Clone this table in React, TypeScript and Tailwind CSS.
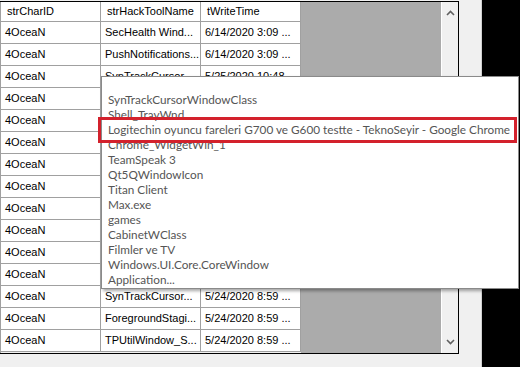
import React from "react";

const rows: [string, string, string][] = [
  ["4OceaN", "SecHealth Wind...", "6/14/2020 3:09 ..."],
  ["4OceaN", "PushNotifications...", "6/14/2020 3:09 ..."],
  ["4OceaN", "SynTrackCursor...", "5/25/2020 10:48 ..."],
  ["4OceaN", "", ""],
  ["4OceaN", "", ""],
  ["4OceaN", "", ""],
  ["4OceaN", "", ""],
  ["4OceaN", "", ""],
  ["4OceaN", "", ""],
  ["4OceaN", "", ""],
  ["4OceaN", "", ""],
  ["4OceaN", "", ""],
  ["4OceaN", "SynTrackCursor...", "5/24/2020 8:59 ..."],
  ["4OceaN", "ForegroundStagi...", "5/24/2020 8:59 ..."],
  ["4OceaN", "TPUtilWindow_S...", "5/24/2020 8:59 ..."],
];

const items = [
  "",
  "SynTrackCursorWindowClass",
  "Shell_TrayWnd",
  "Logitechin oyuncu fareleri G700 ve G600 testte - TeknoSeyir - Google Chrome",
  "Chrome_WidgetWin_1",
  "TeamSpeak 3",
  "Qt5QWindowIcon",
  "Titan Client",
  "Max.exe",
  "games",
  "CabinetWClass",
  "Filmler ve TV",
  "Windows.UI.Core.CoreWindow",
  "Application...",
];

function Cell({ text }: { text: string }) {
  return (
    <div className="w-[100px] h-[22px] border-r border-b border-[#a0a0a0] bg-white pl-[4px] flex items-center whitespace-nowrap overflow-hidden">
      {text}
    </div>
  );
}

export default function App() {
  return (
    <div className="relative w-[520px] h-[367px] flex bg-[#f0f0f0] overflow-hidden text-[11px] text-black" style={{ fontFamily: '"Liberation Sans", Arial, sans-serif' }}>
      <div className="w-[482px] h-full pt-[1px] border-r border-[#d0d0d0]">
        <div className="w-[459px] h-[353px] border-t border-b border-r border-black flex">
          <div className="w-[301px] border-l border-[#a0a0a0] flex flex-col">
            <div className="flex">
              {["strCharID", "strHackToolName", "tWriteTime"].map((h) => (
                <div key={h} className="w-[100px] h-[20px] border-r border-b border-[#a0a0a0] bg-white pl-[6px] flex items-center">
                  {h}
                </div>
              ))}
            </div>
            {rows.map((r, i) => (
              <div key={i} className="flex">
                {r.map((c, j) => (
                  <Cell key={j} text={c} />
                ))}
              </div>
            ))}
          </div>
          <div className="flex-1 bg-[#ababab]" />
          <div className="w-[17px] border-l border-white bg-[#f0f0f0] flex flex-col justify-between items-center py-[8px]">
            <svg width="9" height="6" viewBox="0 0 9 6">
              <path d="M1 5 L4.5 1.5 L8 5" fill="none" stroke="#606060" strokeWidth="1.6" />
            </svg>
            <svg width="9" height="6" viewBox="0 0 9 6">
              <path d="M1 1 L4.5 4.5 L8 1" fill="none" stroke="#606060" strokeWidth="1.6" />
            </svg>
          </div>
        </div>
      </div>
      <div className="flex-1 bg-black" />

      <div
        className="absolute left-[101px] top-[76px] w-[418px] h-[213px] bg-white border border-[#8a8a8a] shadow-[2px_2px_3px_rgba(0,0,0,0.35)] pl-[6px] text-[11.75px] text-[#555555]"
        style={{ fontFamily: 'Lato, "Noto Sans", sans-serif' }}
      >
        {items.map((t, i) => (
          <div key={i} className="h-[15px] leading-[15px] whitespace-nowrap">
            {t}
          </div>
        ))}
        <div className="absolute left-[-4px] top-[40px] w-[419px] h-[26px] border-[3px] border-[#d3212c]" />
      </div>
    </div>
  );
}
